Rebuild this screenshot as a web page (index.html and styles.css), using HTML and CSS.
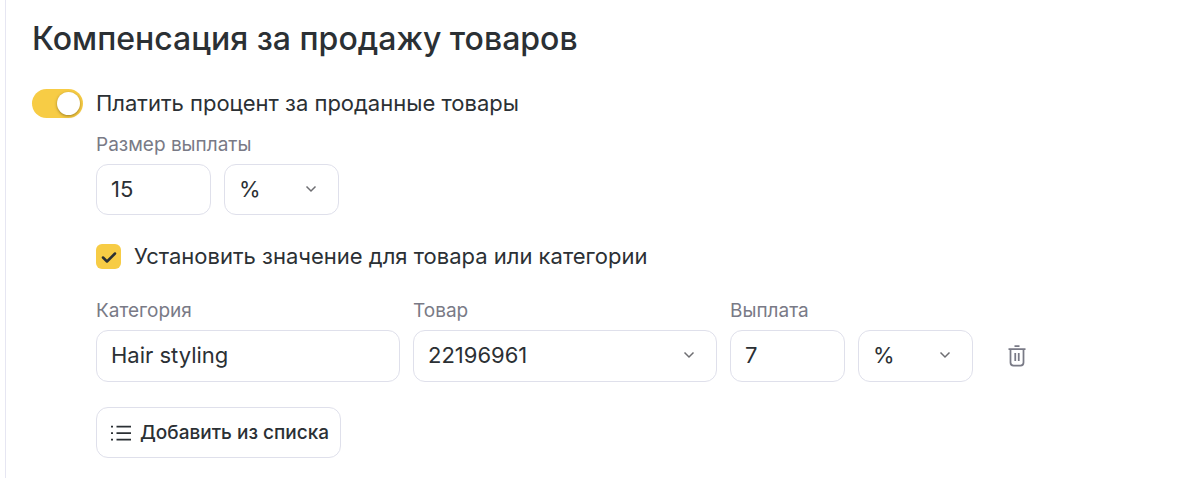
FILE: index.html
```html
<!DOCTYPE html>
<html lang="ru">
<head>
<meta charset="utf-8">
<meta name="viewport" content="width=device-width, initial-scale=1">
<title>Компенсация за продажу товаров</title>
<link rel="stylesheet" href="styles.css">
</head>
<body>
<main class="panel">
  <h1 class="title">Компенсация за продажу товаров</h1>
  <form class="form">
    <label class="option option-switch">
      <input class="switch" type="checkbox" role="switch" checked>
      <span>Платить процент за проданные товары</span>
    </label>
    <div class="details">
      <div class="payout">
        <label class="caption" for="payout-size">Размер выплаты</label>
        <div class="pair">
          <input class="control" id="payout-size" type="text" inputmode="numeric" value="15">
          <div class="dropdown">
            <select class="control" aria-label="Единица выплаты"><option>%</option><option>₽</option></select>
            <svg class="chevron" viewBox="0 0 12 8" aria-hidden="true"><path d="M1.500 1.500 6 6l4.500-4.500"/></svg>
          </div>
        </div>
      </div>
      <label class="option option-check">
        <span class="checkbox">
          <input class="checkbox-input" type="checkbox" checked>
          <svg class="checkbox-mark" viewBox="0 0 25 25" aria-hidden="true"><path d="m7 13.500 4 4 8-8"/></svg>
        </span>
        <span>Установить значение для товара или категории</span>
      </label>
      <div class="rule">
        <div class="field">
          <label class="caption" for="category">Категория</label>
          <input class="control" id="category" type="text" value="Hair styling">
        </div>
        <div class="field">
          <label class="caption" for="product">Товар</label>
          <div class="dropdown">
            <select class="control" id="product"><option>22196961</option></select>
            <svg class="chevron" viewBox="0 0 12 8" aria-hidden="true"><path d="M1.500 1.500 6 6l4.500-4.500"/></svg>
          </div>
        </div>
        <div class="field">
          <label class="caption" for="rule-payout">Выплата</label>
          <input class="control" id="rule-payout" type="text" inputmode="numeric" value="7">
        </div>
        <div class="dropdown">
          <select class="control" aria-label="Единица выплаты для товара"><option>%</option><option>₽</option></select>
          <svg class="chevron" viewBox="0 0 12 8" aria-hidden="true"><path d="M1.500 1.500 6 6l4.500-4.500"/></svg>
        </div>
        <button class="remove" type="button" aria-label="Удалить">
          <svg class="remove-icon" viewBox="0 0 20 24" aria-hidden="true"><path d="M7.500 2h5M1.500 5h17M3.500 5v13.500a3 3 0 0 0 3 3h7a3 3 0 0 0 3-3V5M8.250 9v8M11.750 9v8"/></svg>
        </button>
      </div>
      <button class="add" type="button">
        <svg class="add-icon" viewBox="0 0 20 16" aria-hidden="true"><path d="M0 1.500h2M0 8h2M0 14.500h2M5.500 1.500H20M5.500 8H20M5.500 14.500H20"/></svg>
        <span>Добавить из списка</span>
      </button>
    </div>
  </form>
</main>
</body>
</html>
```
FILE: styles.css
```css
* {
  box-sizing: border-box;
}

body {
  margin: 0;
  background: #fff;
  color: #2b3034;
  font-family: Inter, "Liberation Sans", sans-serif;
  font-size: 22px;
  line-height: 28px;
}

.panel {
  min-height: 100vh;
  margin-left: 5px;
  padding: 19px 26px 20px;
  border-left: 1px solid #e6e6f2;
}

.title {
  margin: 0 0 30px;
  font-size: 32px;
  font-weight: 500;
  line-height: 40px;
}

.option {
  display: flex;
  align-items: center;
  gap: 13px;
}

.option-switch {
  align-items: flex-start;
}

.switch {
  flex: none;
  display: flex;
  align-items: center;
  justify-content: flex-end;
  width: 51px;
  height: 29px;
  margin: 0;
  padding: 3px;
  appearance: none;
  border-radius: 15px;
  background: #f7cc45;
}

.switch::before {
  content: "";
  width: 23px;
  height: 23px;
  border-radius: 50%;
  background: #fff;
  box-shadow: 0 1px 3px rgba(70, 50, 0, 0.5);
}

.switch:not(:checked) {
  justify-content: flex-start;
  background: #d9dae3;
}

.details {
  display: flex;
  flex-direction: column;
  align-items: flex-start;
  padding: 15px 0 0 64px;
}

.caption {
  display: block;
  margin-bottom: 7px;
  color: #797a86;
  font-size: 19px;
  line-height: 24px;
}

.pair {
  display: grid;
  grid-template-columns: 115px 115px;
  gap: 13px;
}

.control {
  display: block;
  width: 100%;
  height: 51px;
  margin: 0;
  padding: 0 14px 2px;
  appearance: none;
  border: 1px solid #dfe0eb;
  border-radius: 12px;
  background: #fff;
  color: inherit;
  font: inherit;
}

.dropdown {
  position: relative;
}

.chevron {
  position: absolute;
  top: 21px;
  right: 22px;
  width: 12px;
  height: 8px;
  fill: none;
  stroke: #6e6e72;
  stroke-width: 1.5;
  pointer-events: none;
}

.option-check {
  margin: 27px 0 29px;
}

.checkbox {
  position: relative;
  flex: none;
  width: 25px;
  height: 25px;
}

.checkbox-input {
  display: block;
  width: 100%;
  height: 100%;
  margin: 0;
  appearance: none;
  border-radius: 6px;
  background: #d9dae3;
}

.checkbox-input:checked {
  background: #f7cc45;
}

.checkbox-mark {
  position: absolute;
  inset: 0;
  fill: none;
  stroke: #2b3034;
  stroke-width: 2.5;
  stroke-linecap: round;
  stroke-linejoin: round;
  pointer-events: none;
}

.rule {
  display: grid;
  grid-template-columns: minmax(0, 304px) minmax(0, 304px) 115px 115px auto;
  align-items: end;
  gap: 13px;
  max-width: 100%;
}

.rule .control {
  height: 52px;
}

.remove {
  display: grid;
  place-items: center;
  width: 62px;
  height: 52px;
  padding: 0;
  border: 0;
  background: none;
  color: #797a86;
}

.remove-icon {
  width: 20px;
  height: 24px;
  fill: none;
  stroke: currentColor;
  stroke-width: 1.75;
}

.add {
  display: flex;
  align-items: center;
  gap: 9px;
  height: 51px;
  margin-top: 25px;
  padding: 0 11px 0 14px;
  border: 1px solid #dfe0eb;
  border-radius: 12px;
  background: #fff;
  color: inherit;
  font: 500 19px/24px Inter, "Liberation Sans", sans-serif;
}

.add-icon {
  width: 20px;
  height: 16px;
  stroke: currentColor;
  stroke-width: 1.75;
}
```
